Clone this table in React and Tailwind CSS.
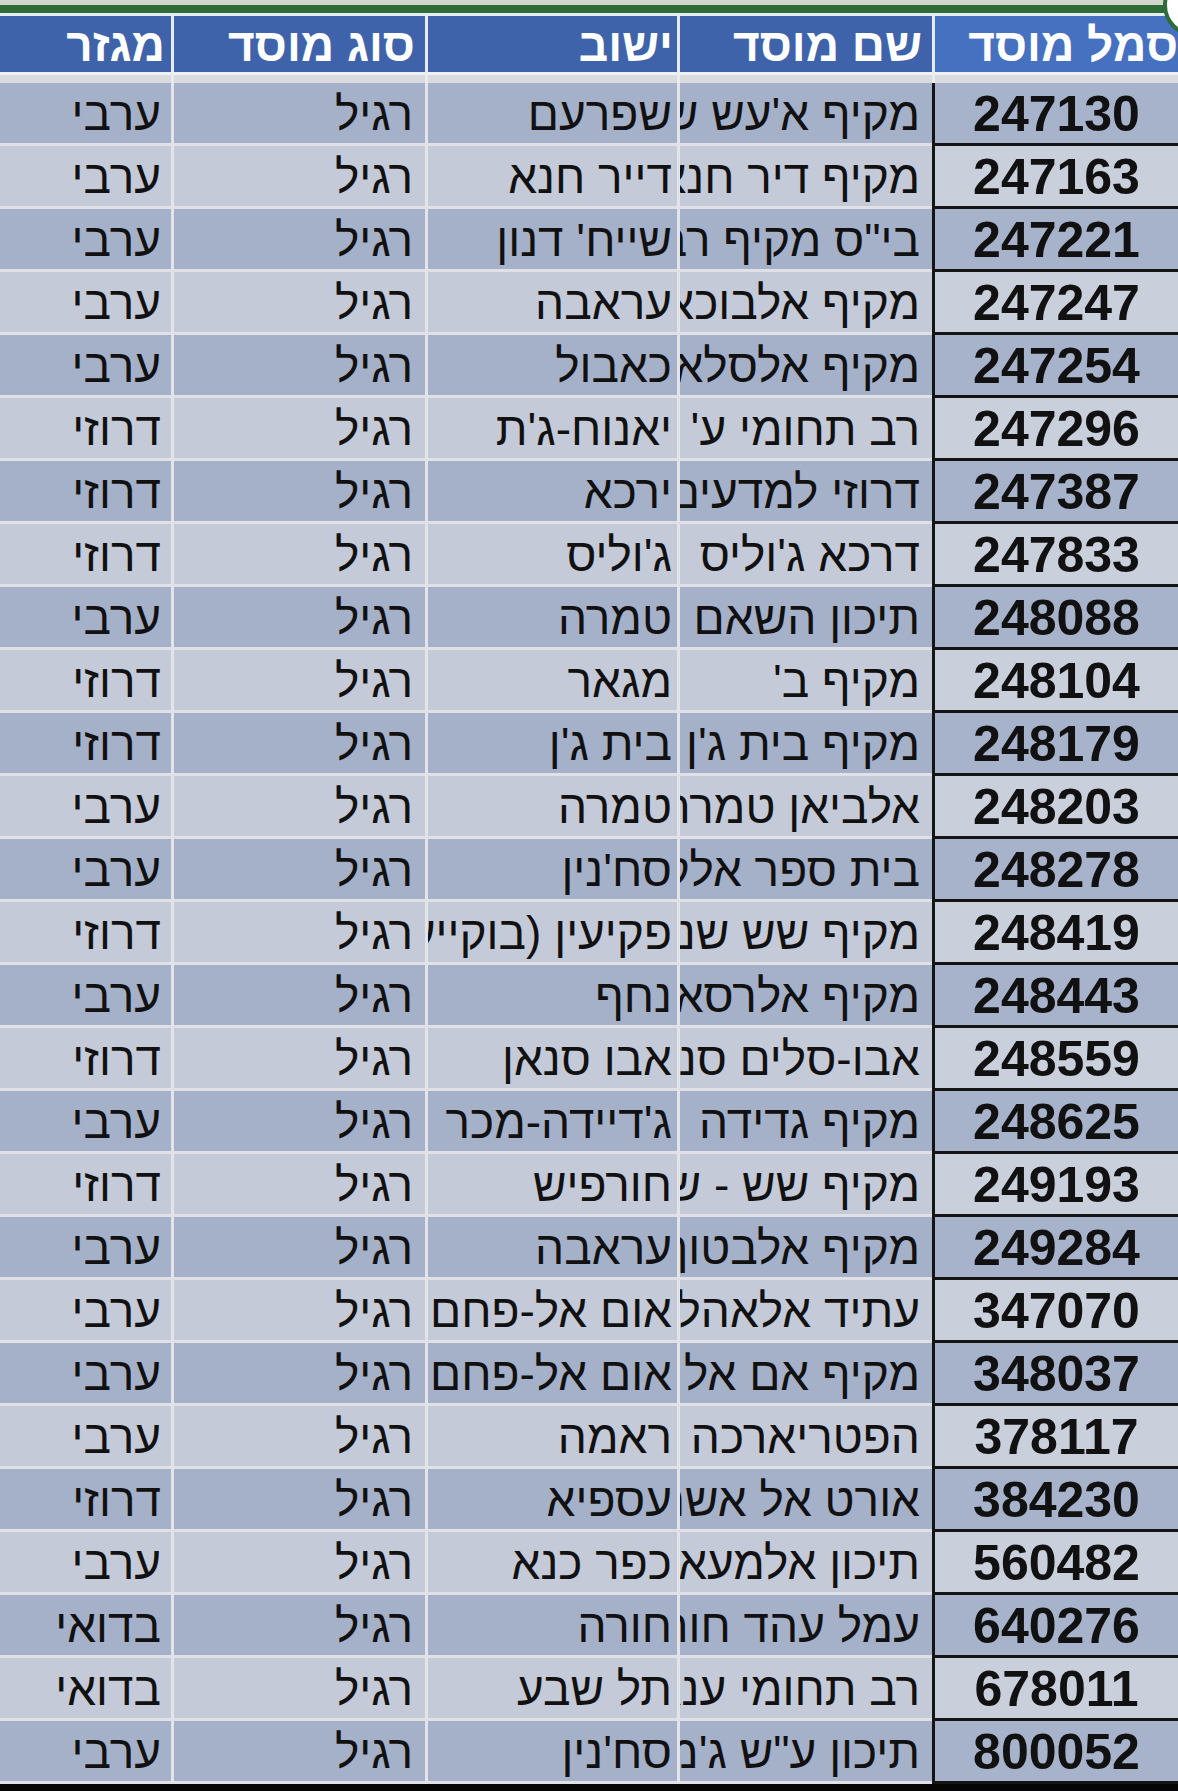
import React from "react";

const rows = [
  ["247130", "מקיף א'עש שפרעם", "שפרעם", "רגיל", "ערבי"],
  ["247163", "מקיף דיר חנא", "דייר חנא", "רגיל", "ערבי"],
  ["247221", 'בי"ס מקיף רב תחומי', "שייח' דנון", "רגיל", "ערבי"],
  ["247247", "מקיף אלבוכארי", "עראבה", "רגיל", "ערבי"],
  ["247254", "מקיף אלסלאם", "כאבול", "רגיל", "ערבי"],
  ["247296", "רב תחומי ע' יאנוח", "יאנוח-ג'ת", "רגיל", "דרוזי"],
  ["247387", "דרוזי למדעים", "ירכא", "רגיל", "דרוזי"],
  ["247833", "דרכא ג'וליס", "ג'וליס", "רגיל", "דרוזי"],
  ["248088", "תיכון השאם", "טמרה", "רגיל", "ערבי"],
  ["248104", "מקיף ב'", "מגאר", "רגיל", "דרוזי"],
  ["248179", "מקיף בית ג'ן", "בית ג'ן", "רגיל", "דרוזי"],
  ["248203", "אלביאן טמרה", "טמרה", "רגיל", "ערבי"],
  ["248278", "בית ספר אלקלעה", "סח'נין", "רגיל", "ערבי"],
  ["248419", "מקיף שש שנתי", "פקיעין (בוקייעה)", "רגיל", "דרוזי"],
  ["248443", "מקיף אלרסאלה", "נחף", "רגיל", "ערבי"],
  ["248559", "אבו-סלים סנאן", "אבו סנאן", "רגיל", "דרוזי"],
  ["248625", "מקיף גדידה", "ג'דיידה-מכר", "רגיל", "ערבי"],
  ["249193", "מקיף שש - שנתי", "חורפיש", "רגיל", "דרוזי"],
  ["249284", "מקיף אלבטוף", "עראבה", "רגיל", "ערבי"],
  ["347070", "עתיד אלאהליה", "אום אל-פחם", "רגיל", "ערבי"],
  ["348037", "מקיף אם אל פחם", "אום אל-פחם", "רגיל", "ערבי"],
  ["378117", "הפטריארכה", "ראמה", "רגיל", "ערבי"],
  ["384230", "אורט אל אשראק", "עספיא", "רגיל", "דרוזי"],
  ["560482", "תיכון אלמעארף", "כפר כנא", "רגיל", "ערבי"],
  ["640276", "עמל עהד חורה", "חורה", "רגיל", "בדואי"],
  ["678011", "רב תחומי ענאם", "תל שבע", "רגיל", "בדואי"],
  ["800052", "תיכון ע\"ש ג'מאל", "סח'נין", "רגיל", "ערבי"],
];

const COLS = "grid grid-cols-[246px_255px_252px_254px_171px]";

function Row({ r, i }) {
  const dark = i % 2 === 0;
  const bg = dark ? "bg-[#a5b0c9]" : "bg-[#c5cad8]";
  const bgId = dark ? "bg-[#a7b2cb]" : "bg-[#cacfdc]";
  const cell =
    "h-[63px] overflow-hidden whitespace-nowrap border-b-[3px] border-b-[#dfe1e7] flex items-center text-[46px] text-[#111]";
  return (
    <div className={COLS}>
      <div
        className={`h-[63px] flex items-center justify-center border-b-[3px] border-b-[#151515] border-l-[3px] border-l-[#151515] font-bold text-[50px] text-[#111] pt-[3px] ${bgId}`}
      >
        {r[0]}
      </div>
      <div className={`${cell} ${bg} border-l-[3px] border-l-[#e2e4e9] pr-[12px]`}>
        <span className="pt-[3px]">{r[1]}</span>
      </div>
      <div className={`${cell} ${bg} border-l-[3px] border-l-[#e2e4e9] pr-[5px]`}>
        <span className="pt-[3px]">{r[2]}</span>
      </div>
      <div className={`${cell} ${bg} border-l-[3px] border-l-[#e2e4e9] pr-[12px]`}>
        <span className="pt-[3px]">{r[3]}</span>
      </div>
      <div className={`${cell} ${bg} pr-[10px]`}>
        <span className="pt-[3px]">{r[4]}</span>
      </div>
    </div>
  );
}

const headers = [
  ["סמל מוסד", "bg-[#4670c0] pr-0"],
  ["שם מוסד", "bg-[#3f63aa] pr-[10px]"],
  ["ישוב", "bg-[#3f63aa] pr-[4px]"],
  ["סוג מוסד", "bg-[#3f63aa] pr-[10px]"],
  ["מגזר", "bg-[#3f63aa] pr-[6px]"],
];

export default function App() {
  return (
    <div
      dir="rtl"
      className="relative w-[1178px] h-[1791px] overflow-hidden bg-[#050505] font-['Liberation_Sans','DejaVu_Sans',sans-serif]"
    >
      <div className="h-[5px] bg-[#d2d7ce]" />
      <div className="h-[8px] bg-[#2f6b38]" />
      <div className="h-[3px] bg-[#e4ecf4]" />
      <div className={COLS}>
        {headers.map(([h, cls], i) => (
          <div
            key={h}
            className={`h-[56px] flex items-center overflow-hidden whitespace-nowrap text-white font-bold text-[46px] ${cls} ${
              i < 4 ? "border-l-[3px] border-l-[#e6ebf2]" : ""
            }`}
          >
            <span className="pt-[3px]">{h}</span>
          </div>
        ))}
      </div>
      <div className={COLS}>
        {headers.map(([h], i) => (
          <div
            key={h}
            className={`h-[11px] bg-[#d9dbdf] border-t-[3px] border-t-[#eef0f3] ${
              i < 4 ? "border-l-[3px] border-l-[#e9ebef]" : ""
            }`}
          />
        ))}
      </div>
      {rows.map((r, i) => (
        <Row key={r[0]} r={r} i={i} />
      ))}
      <svg
        className="absolute top-0 right-0"
        width="20"
        height="40"
        viewBox="0 0 20 40"
      >
        <circle cx="37" cy="5" r="30" fill="#ffffff" stroke="#2f6b38" strokeWidth="4" />
      </svg>
    </div>
  );
}
